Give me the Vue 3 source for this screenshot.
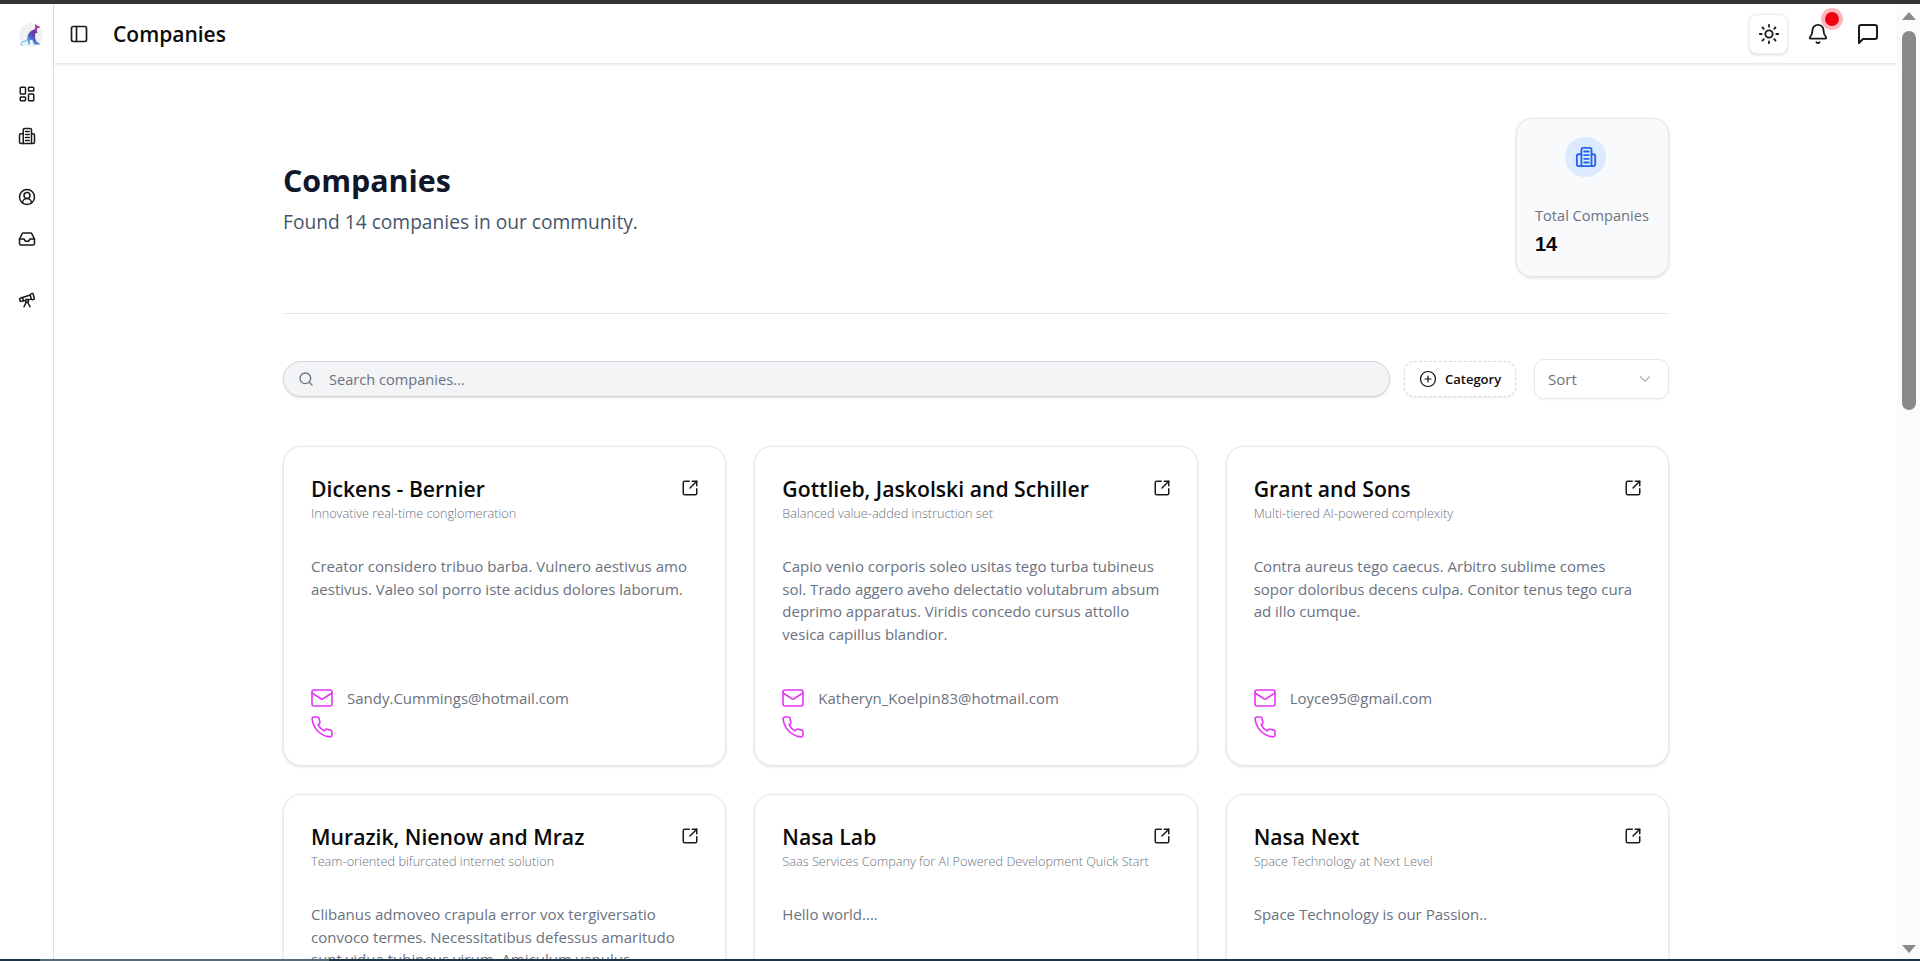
<script setup>
const companies = [
  {
    name: 'Dickens - Bernier',
    tagline: 'Innovative real-time conglomeration',
    about: 'Creator considero tribuo barba. Vulnero aestivus amo aestivus. Valeo sol porro iste acidus dolores laborum.',
    email: 'Sandy.Cummings@hotmail.com'
  },
  {
    name: 'Gottlieb, Jaskolski and Schiller',
    tagline: 'Balanced value-added instruction set',
    about: 'Capio venio corporis soleo usitas tego turba tubineus sol. Trado aggero aveho delectatio volutabrum absum deprimo apparatus. Viridis concedo cursus attollo vesica capillus blandior.',
    email: 'Katheryn_Koelpin83@hotmail.com'
  },
  {
    name: 'Grant and Sons',
    tagline: 'Multi-tiered AI-powered complexity',
    about: 'Contra aureus tego caecus. Arbitro sublime comes sopor doloribus decens culpa. Conitor tenus tego cura ad illo cumque.',
    email: 'Loyce95@gmail.com'
  },
  {
    name: 'Murazik, Nienow and Mraz',
    tagline: 'Team-oriented bifurcated internet solution',
    about: 'Clibanus admoveo crapula error vox tergiversatio convoco termes. Necessitatibus defessus amaritudo sunt vidua tubineus virum. Amiculum vapulus.',
    email: ''
  },
  {
    name: 'Nasa Lab',
    tagline: 'Saas Services Company for AI Powered Development Quick Start',
    about: 'Hello world....',
    email: ''
  },
  {
    name: 'Nasa Next',
    tagline: 'Space Technology at Next Level',
    about: 'Space Technology is our Passion..',
    email: ''
  }
]
</script>

<template>
  <div class="page">
    <div class="top-strip"></div>
    <div class="frame">
      <!-- sidebar -->
      <aside class="sidebar">
        <svg class="logo" viewBox="0 0 24 24">
          <defs>
            <linearGradient id="roo" x1="0.7" y1="0" x2="0.2" y2="1">
              <stop offset="0" stop-color="#c02c8e" />
              <stop offset="0.5" stop-color="#5a3fb0" />
              <stop offset="1" stop-color="#3fb4e8" />
            </linearGradient>
          </defs>
          <circle cx="12" cy="12" r="12" fill="#f1f1f4" />
          <path fill="url(#roo)" d="M16 1l2.400 1.800 2.600 1-.7 1.200-2.300.2-.1 3 .8 2-2.200-.2-.4 2.500.2 3.200 1 2.600 4.200 3.200H15l-1.500-4.200-2-.6-1 1.400.3 3.400H9.200l-.8-5.500c-.4-4.500 2.700-8.700 7-9.600l1-1.400z" />
          <path fill="none" stroke="#3fb4e8" stroke-width="1" d="M8.500 16.500c-2 2.500-5.500 1.500-6.500 4-.5 1.400.8 2.200 2 1.700" />
        </svg>
        <nav class="nav-group first">
          <svg class="icon" viewBox="0 0 24 24"><rect x="3" y="3" width="7" height="9" rx="1" /><rect x="14" y="3" width="7" height="5" rx="1" /><rect x="14" y="12" width="7" height="9" rx="1" /><rect x="3" y="16" width="7" height="5" rx="1" /></svg>
          <svg class="icon" viewBox="0 0 24 24"><path d="M7 22V4a2 2 0 0 1 2-2h7a2 2 0 0 1 2 2v18" /><path d="M7 9H4a2 2 0 0 0-2 2v9a2 2 0 0 0 2 2h16a2 2 0 0 0 2-2v-9a2 2 0 0 0-2-2h-2" /><path d="M10 6h5M10 10h5M10 14h5M10 18h5" /></svg>
        </nav>
        <nav class="nav-group">
          <svg class="icon" viewBox="0 0 24 24"><path d="M18 20a6 6 0 0 0-12 0" /><circle cx="12" cy="10" r="4" /><circle cx="12" cy="12" r="10" /></svg>
          <svg class="icon" viewBox="0 0 24 24"><polyline points="22 12 16 12 14 15 10 15 8 12 2 12" /><path d="M5.450 5.110 2 12v6a2 2 0 0 0 2 2h16a2 2 0 0 0 2-2v-6l-3.450-6.890A2 2 0 0 0 16.760 4H7.240a2 2 0 0 0-1.790 1.110z" /></svg>
        </nav>
        <nav class="nav-group">
          <svg class="icon" viewBox="0 0 24 24"><path d="m10.065 12.493-6.18 1.318a.934.934 0 0 1-1.108-.702l-.537-2.15a1.07 1.07 0 0 1 .691-1.265l13.504-4.44" /><path d="m13.56 11.747 4.332-.924" /><path d="m16 21-3.105-6.21" /><path d="M16.485 5.94a2 2 0 0 1 1.455-2.425l1.09-.272a1 1 0 0 1 1.212.727l1.515 6.06a1 1 0 0 1-.727 1.213l-1.09.272a2 2 0 0 1-2.425-1.455z" /><path d="m6.158 8.633 1.114 4.456" /><path d="m8 21 3.105-6.21" /><circle cx="12" cy="13" r="2" /></svg>
        </nav>
      </aside>

      <div class="shell">
        <!-- header -->
        <header class="header">
          <svg class="icon panel-icon" viewBox="0 0 24 24"><rect x="3" y="3" width="18" height="18" rx="2" /><path d="M9 3v18" /></svg>
          <div class="header-title">Companies</div>
          <div class="header-actions">
            <button class="theme-btn">
              <svg class="icon" viewBox="0 0 24 24"><circle cx="12" cy="12" r="4" /><path d="M12 2v2M12 20v2M4.930 4.930l1.410 1.410M17.660 17.660l1.410 1.410M2 12h2M20 12h2M6.340 17.660l-1.410 1.410M19.070 4.930l-1.410 1.410" /></svg>
            </button>
            <div class="bell">
              <svg class="icon" viewBox="0 0 24 24"><path d="M10.268 21a2 2 0 0 0 3.464 0" /><path d="M3.262 15.326A1 1 0 0 0 4 17h16a1 1 0 0 0 .74-1.673C19.41 13.956 18 12.499 18 8A6 6 0 0 0 6 8c0 4.499-1.411 5.956-2.738 7.326" /></svg>
              <span class="dot"></span>
            </div>
            <svg class="icon msg" viewBox="0 0 24 24"><path d="M21 15a2 2 0 0 1-2 2H7l-4 4V5a2 2 0 0 1 2-2h14a2 2 0 0 1 2 2z" /></svg>
          </div>
        </header>

        <main class="main">
          <div class="content">
            <section class="hero">
              <div class="hero-text">
                <h1>Companies</h1>
                <p>Found 14 companies in our community.</p>
              </div>
              <div class="stat-card">
                <div class="stat-icon">
                  <svg class="icon" viewBox="0 0 24 24"><path d="M7 22V4a2 2 0 0 1 2-2h7a2 2 0 0 1 2 2v18" /><path d="M7 9H4a2 2 0 0 0-2 2v9a2 2 0 0 0 2 2h16a2 2 0 0 0 2-2v-9a2 2 0 0 0-2-2h-2" /><path d="M10 6h5M10 10h5M10 14h5M10 18h5" /></svg>
                </div>
                <div class="stat-label">Total Companies</div>
                <div class="stat-value">14</div>
              </div>
            </section>

            <section class="toolbar">
              <div class="search">
                <svg class="icon" viewBox="0 0 24 24"><circle cx="11" cy="11" r="8" /><path d="m21 21-4.300-4.300" /></svg>
                <span>Search companies...</span>
              </div>
              <button class="category">
                <svg class="icon" viewBox="0 0 24 24"><circle cx="12" cy="12" r="10" /><path d="M8 12h8M12 8v8" /></svg>
                <span>Category</span>
              </button>
              <div class="sort">
                <span>Sort</span>
                <svg class="icon" viewBox="0 0 24 24"><path d="m6 9 6 6 6-6" /></svg>
              </div>
            </section>

            <section class="grid">
              <article v-for="c in companies" :key="c.name" class="card">
                <div class="card-head">
                  <h2>{{ c.name }}</h2>
                  <svg class="icon" viewBox="0 0 24 24"><path d="M21 13v6a2 2 0 0 1-2 2H5a2 2 0 0 1-2-2V5a2 2 0 0 1 2-2h6" /><path d="m21 3-9 9" /><path d="M15 3h6v6" /></svg>
                </div>
                <div class="tagline">{{ c.tagline }}</div>
                <p class="about">{{ c.about }}</p>
                <div class="contacts">
                  <div class="contact">
                    <svg class="icon" viewBox="0 0 24 24"><rect x="2" y="4" width="20" height="16" rx="2" /><path d="m22 7-8.970 5.700a1.940 1.940 0 0 1-2.060 0L2 7" /></svg>
                    <span>{{ c.email }}</span>
                  </div>
                  <div class="contact">
                    <svg class="icon" viewBox="0 0 24 24"><path d="M22 16.920v3a2 2 0 0 1-2.180 2 19.790 19.790 0 0 1-8.630-3.070 19.500 19.500 0 0 1-6-6 19.790 19.790 0 0 1-3.070-8.670A2 2 0 0 1 4.110 2h3a2 2 0 0 1 2 1.720 12.840 12.840 0 0 0 .7 2.810 2 2 0 0 1-.45 2.110L8.090 9.910a16 16 0 0 0 6 6l1.270-1.270a2 2 0 0 1 2.110-.45 12.840 12.840 0 0 0 2.810.7A2 2 0 0 1 22 16.920z" /></svg>
                  </div>
                </div>
              </article>
            </section>
          </div>
        </main>
      </div>

      <!-- browser scrollbar -->
      <div class="scrollbar">
        <span class="arrow up"></span>
        <div class="track"><div class="thumb"></div></div>
        <span class="arrow down"></span>
      </div>
    </div>
    <div class="bottom-strip">
      <span class="seg-a"></span>
      <span class="seg-b"></span>
      <span class="seg-c"></span>
    </div>
  </div>
</template>

<style>
html, body {
  margin: 0;
  background: #fff;
}
</style>

<style scoped>
.page {
  height: 961px;
  display: flex;
  flex-direction: column;
  overflow: hidden;
  background: #fff;
  font-family: "Open Sans", "Noto Sans", sans-serif;
  color: #0b0f19;
}

.top-strip {
  height: 4px;
  background: #333436;
  flex: none;
}

.bottom-strip {
  height: 2px;
  display: flex;
  flex: none;
  background: #1d3444;
}
.seg-a { width: 40px; }
.seg-b { width: 289px; background: #566977; }

.frame {
  flex: 1;
  min-height: 0;
  display: flex;
}

.icon {
  fill: none;
  stroke: currentColor;
  stroke-width: 2;
  stroke-linecap: round;
  stroke-linejoin: round;
  flex: none;
  display: block;
}

/* sidebar */
.sidebar {
  width: 53px;
  flex: none;
  border-right: 1px solid #dddfe3;
  display: flex;
  flex-direction: column;
  align-items: center;
}
.logo {
  width: 24px;
  height: 24px;
  margin-top: 19px;
  margin-left: 9px;
}
.nav-group {
  display: flex;
  flex-direction: column;
  gap: 24px;
  margin-top: 43px;
  color: #1a1a1a;
}
.nav-group.first {
  margin-top: 38px;
}
.nav-group .icon {
  width: 18px;
  height: 18px;
}

/* header */
.shell {
  flex: 1;
  min-width: 0;
  display: flex;
  flex-direction: column;
}
.header {
  height: 59px;
  flex: none;
  display: flex;
  align-items: center;
  padding: 0 17px 0 15px;
  box-shadow: 0 2px 2px rgba(0, 0, 0, 0.09);
  position: relative;
}
.panel-icon {
  width: 20px;
  height: 20px;
  color: #1a1a1a;
}
.header-title {
  font-size: 21px;
  font-weight: 600;
  margin-left: 24px;
  color: #0c0c0c;
}
.header-actions {
  margin-left: auto;
  display: flex;
  align-items: center;
}
.theme-btn {
  width: 39px;
  height: 40px;
  border: 1px solid #f0f0f0;
  border-radius: 8px;
  background: #fff;
  box-shadow: 0 1px 3px rgba(0, 0, 0, 0.16);
  display: flex;
  align-items: center;
  justify-content: center;
  padding: 0;
  color: #1a1a1a;
}
.theme-btn .icon,
.bell .icon {
  width: 22px;
  height: 22px;
  color: #1a1a1a;
}
.msg {
  width: 24px;
  height: 24px;
  color: #1a1a1a;
  margin-left: 27px;
}
.bell {
  position: relative;
  margin-left: 19px;
}
.dot {
  position: absolute;
  width: 14px;
  height: 14px;
  top: -11px;
  left: 18px;
  border-radius: 50%;
  background: #ef0010;
  box-shadow: 0 0 0 4px #fcb9bd;
}

/* main */
.main {
  flex: 1;
  min-height: 0;
  overflow: hidden;
}
.content {
  width: 1386px;
  margin-left: 229px;
  padding-top: 55px;
}
.hero {
  display: flex;
  justify-content: space-between;
  align-items: flex-start;
  height: 195px;
  border-bottom: 1px solid #e5e7eb;
}
.hero-text {
  padding-top: 42px;
}
.hero h1 {
  margin: 0;
  font-size: 30.400px;
  line-height: 42px;
  font-weight: 700;
  color: #0f172a;
}
.hero p {
  margin: 7px 0 0;
  font-size: 19.200px;
  line-height: 26px;
  color: #475569;
}
.stat-card {
  width: 153px;
  height: 159px;
  box-sizing: border-box;
  border: 1px solid #e5e7eb;
  border-radius: 16px;
  background: #f8fafc;
  box-shadow: 0 1px 3px rgba(0, 0, 0, 0.14);
  padding: 18px 18px 0;
}
.stat-icon {
  width: 41px;
  height: 40px;
  margin-left: 30px;
  border-radius: 50%;
  background: #dbeafe;
  color: #2563eb;
  display: flex;
  align-items: center;
  justify-content: center;
}
.stat-icon .icon {
  width: 22px;
  height: 22px;
}
.stat-label {
  margin-top: 28px;
  font-size: 14.600px;
  line-height: 20px;
  color: #6b7280;
  white-space: nowrap;
}
.stat-value {
  margin-top: 7px;
  font-family: "Liberation Sans", sans-serif;
  font-size: 20px;
  line-height: 24px;
  font-weight: 700;
  color: #0a0a0a;
}

/* toolbar */
.toolbar {
  display: flex;
  align-items: center;
  margin-top: 45px;
  height: 40px;
}
.search {
  width: 1107px;
  height: 36px;
  box-sizing: border-box;
  border: 1px solid #d1d5db;
  border-radius: 18px;
  background: #f3f4f6;
  box-shadow: 0 1px 2px rgba(0, 0, 0, 0.12);
  display: flex;
  align-items: center;
  padding-left: 14px;
  color: #6b7280;
  font-size: 14.600px;
}
.search .icon {
  width: 16px;
  height: 16px;
  margin-right: 15px;
}
.category {
  width: 112px;
  height: 36px;
  margin-left: 14px;
  box-sizing: border-box;
  border: 1px dashed #d9dbe0;
  border-radius: 10px;
  background: #fff;
  box-shadow: 0 1px 2px rgba(0, 0, 0, 0.08);
  display: flex;
  align-items: center;
  padding: 0 0 0 14px;
  font-family: inherit;
  font-size: 13px;
  font-weight: 600;
  color: #0c0c0c;
}
.category .icon {
  width: 18px;
  height: 18px;
  margin-right: 8px;
  stroke-width: 1.6;
}
.sort {
  width: 135px;
  height: 40px;
  margin-left: 18px;
  box-sizing: border-box;
  border: 1px solid #e5e7eb;
  border-radius: 10px;
  display: flex;
  align-items: center;
  justify-content: space-between;
  padding: 0 14px 0 13px;
  font-size: 15px;
  color: #6b7280;
  box-shadow: 0 1px 2px rgba(0, 0, 0, 0.05);
}
.sort .icon {
  width: 18px;
  height: 18px;
  color: #a9adb5;
  stroke-width: 1.5;
}

/* cards */
.grid {
  display: grid;
  grid-template-columns: repeat(3, 1fr);
  gap: 28px;
  margin-top: 47px;
}
.card {
  height: 320px;
  box-sizing: border-box;
  border: 1px solid #e5e7eb;
  border-radius: 18px;
  background: #fff;
  box-shadow: 0 1px 3px rgba(0, 0, 0, 0.12);
  padding: 26px 26px 26px 27px;
  display: flex;
  flex-direction: column;
}
.card-head {
  display: flex;
  align-items: center;
  justify-content: space-between;
  height: 30px;
  flex: none;
}
.card-head h2 {
  margin: 0;
  font-size: 21.200px;
  font-weight: 600;
  color: #0a0a0a;
}
.card-head .icon {
  width: 18px;
  height: 18px;
  color: #1a1a1a;
}
.tagline {
  font-size: 12.700px;
  line-height: 18px;
  font-weight: 300;
  color: #6b7280;
  margin-top: 1px;
  flex: none;
}
.about {
  margin: 33px 1px 0 0;
  font-size: 15px;
  line-height: 22.500px;
  color: #6b7280;
  flex: none;
}
.contacts {
  margin-top: auto;
  display: flex;
  flex-direction: column;
  gap: 5px;
  flex: none;
}
.contact {
  display: flex;
  align-items: center;
  height: 24px;
  font-size: 15px;
  color: #6b7280;
}
.contact .icon {
  width: 24px;
  height: 24px;
  margin-left: -1px;
  margin-right: 13px;
  color: #e535f5;
  stroke-width: 1.600;
}

/* scrollbar */
.scrollbar {
  width: 23px;
  flex: none;
  background: #fbfbfb;
  display: flex;
  flex-direction: column;
  align-items: center;
}
.arrow {
  width: 0;
  height: 0;
  border-left: 7.500px solid transparent;
  border-right: 7.500px solid transparent;
  flex: none;
}
.arrow.up {
  border-bottom: 8px solid #8a8a8a;
  margin-top: 8px;
}
.arrow.down {
  border-top: 8px solid #8a8a8a;
  margin-bottom: 6px;
}
.track {
  flex: 1;
  width: 100%;
  display: flex;
  justify-content: center;
}
.thumb {
  width: 14px;
  height: 379px;
  margin-top: 11px;
  border-radius: 7px;
  background: #8a8a8a;
}
</style>
